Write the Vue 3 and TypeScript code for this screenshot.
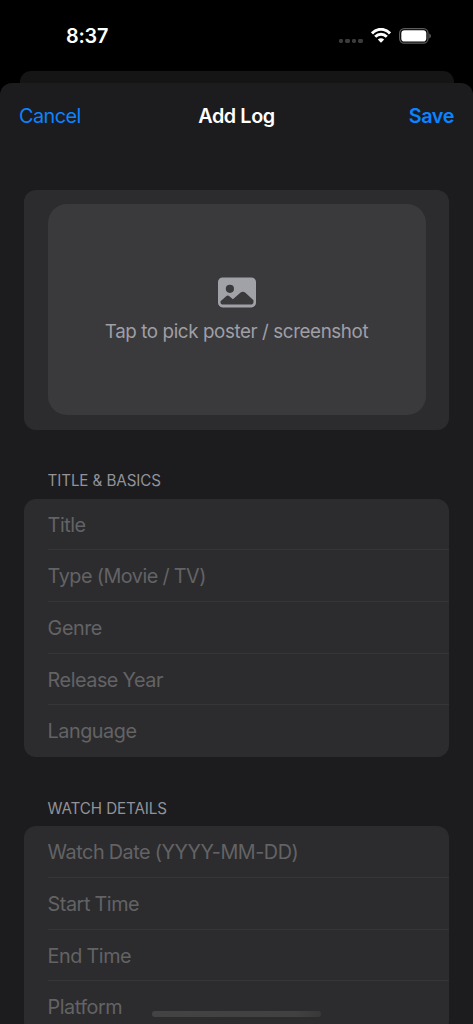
<script setup lang="ts">
interface Section {
  title: string
  fields: string[]
}

const sections: Section[] = [
  {
    title: 'TITLE & BASICS',
    fields: ['Title', 'Type (Movie / TV)', 'Genre', 'Release Year', 'Language'],
  },
  {
    title: 'WATCH DETAILS',
    fields: ['Watch Date (YYYY-MM-DD)', 'Start Time', 'End Time', 'Platform'],
  },
]
</script>

<template>
  <div class="screen">
    <header class="status">
      <span class="time">8:37</span>
      <div class="indicators">
        <div class="dots"><i v-for="n in 4" :key="n"></i></div>
        <svg class="wifi" width="20" height="15" viewBox="0 0 20 15">
          <g fill="none" stroke="#fff" stroke-width="2.9">
            <path d="M1 5.4C6-.1 14-.1 19 5.4" />
            <path d="M4.2 8.8C7.5 5.4 12.5 5.4 15.8 8.8" />
          </g>
          <path d="M6.8 11.4C8.7 9.7 11.3 9.7 13.2 11.4L10 14.7Z" fill="#fff" />
        </svg>
        <svg class="battery" width="33" height="16" viewBox="0 0 33 16">
          <rect x=".6" y=".6" width="28.4" height="14.6" rx="4.6" fill="none" stroke="#5c5c5c" stroke-width="1.2" />
          <rect x="2.3" y="2.3" width="25" height="11.2" rx="3.1" fill="#fff" />
          <path d="M30.4 5.4C32.2 6.2 32.2 9.5 30.4 10.3Z" fill="#707070" />
        </svg>
      </div>
    </header>
    <div class="behind"></div>
    <main class="sheet">
      <nav class="bar">
        <button class="cancel">Cancel</button>
        <h1>Add Log</h1>
        <button class="save">Save</button>
      </nav>
      <section class="card picker">
        <div class="drop">
          <svg width="38" height="31" viewBox="0 0 38 31">
            <rect y=".4" width="38" height="30" rx="4.6" fill="#a1a1a8" />
            <circle cx="11.9" cy="11.8" r="4.1" fill="#3a3a3c" />
            <path d="M2.5 24.2L8.2 19.2Q9.8 18 11.4 19.2L14.9 22.3L22.6 15.6Q24.9 13.8 27.1 15.6L35.5 23.2V24.8Q35.5 27.6 32.7 27.6H5.3Q2.5 27.6 2.5 25Z" fill="#3a3a3c" />
          </svg>
          <p>Tap to pick poster / screenshot</p>
        </div>
      </section>
      <section v-for="section in sections" :key="section.title" class="group">
        <h2>{{ section.title }}</h2>
        <div class="card">
          <div v-for="field in section.fields" :key="field" class="row">
            <span>{{ field }}</span>
          </div>
        </div>
      </section>
    </main>
    <div class="home"></div>
  </div>
</template>

<style>
body {
  margin: 0;
  background: #000;
}
</style>

<style scoped>
.screen {
  position: relative;
  width: 473px;
  height: 1024px;
  overflow: hidden;
  background: #000;
  color: #fff;
  font-family: Inter, "Liberation Sans", sans-serif;
  font-size: 19.8px;
}
.status {
  display: flex;
  justify-content: space-between;
  height: 71px;
  padding: 0 41px 0 66px;
  box-sizing: border-box;
}
.time {
  margin-top: 23px;
  line-height: 26px;
  font-weight: 600;
  letter-spacing: -0.2px;
}
.indicators {
  display: flex;
  align-items: flex-start;
}
.dots {
  display: flex;
  gap: 2.4px;
  margin: 38.5px 8px 0 0;
}
.dots i {
  width: 4.1px;
  height: 4.4px;
  border-radius: 1.4px;
  background: #3b3b3b;
}
.wifi {
  margin: 28px 8.5px 0 0;
}
.battery {
  margin-top: 27.5px;
}
.behind {
  height: 12px;
  margin: 0 19.5px;
  border-radius: 11px 11px 0 0;
  background: #151516;
}
.sheet {
  height: 941px;
  border-radius: 12px 12px 0 0;
  background: #1c1c1e;
  overflow: hidden;
}
.bar {
  display: grid;
  grid-template-columns: 1fr auto 1fr;
  align-items: center;
  height: 66px;
  padding: 0 19px;
}
.bar button {
  padding: 0;
  border: 0;
  background: none;
  color: #0a84ff;
  font: inherit;
}
.bar .cancel {
  justify-self: start;
  letter-spacing: -0.5px;
}
.bar .save {
  justify-self: end;
  font-weight: 600;
  letter-spacing: -0.4px;
}
h1 {
  margin: 0;
  font-size: 19.8px;
  font-weight: 600;
  letter-spacing: -0.4px;
}
.card {
  margin: 0 24px;
  border-radius: 12px;
  background: #2c2c2e;
  overflow: hidden;
}
.picker {
  margin-top: 40.7px;
  height: 240px;
  padding: 14px 23.5px;
  box-sizing: border-box;
}
.drop {
  display: flex;
  flex-direction: column;
  align-items: center;
  height: 211.5px;
  padding-top: 73.3px;
  box-sizing: border-box;
  border-radius: 19px;
  background: #3a3a3c;
}
.drop svg {
  flex: none;
}
.drop p {
  margin: 10.7px 0 0;
  line-height: 26px;
  color: #9f9fa6;
  font-size: 18.8px;
  letter-spacing: -0.4px;
  white-space: nowrap;
}
h2 {
  margin: 0 47.5px;
  padding-top: 41px;
  height: 28px;
  line-height: 20px;
  font-size: 15.2px;
  font-weight: 400;
  letter-spacing: -0.1px;
  color: #929298;
}
.group + .group h2 {
  padding-top: 41.5px;
  height: 27.5px;
}
.row {
  display: flex;
  align-items: center;
  height: 51.7px;
  margin-left: 23.6px;
  padding-top: 1.4px;
  box-sizing: border-box;
  border-bottom: 1px solid #363639;
  color: #636365;
  letter-spacing: -0.46px;
  word-spacing: -0.5px;
}
.row:last-child {
  border-bottom-color: transparent;
}
.home {
  position: absolute;
  left: 152px;
  top: 1011px;
  width: 169px;
  height: 6px;
  border-radius: 3px;
  background: linear-gradient(90deg, #434343 0%, #414141 85%, #38383a 100%);
}
</style>
